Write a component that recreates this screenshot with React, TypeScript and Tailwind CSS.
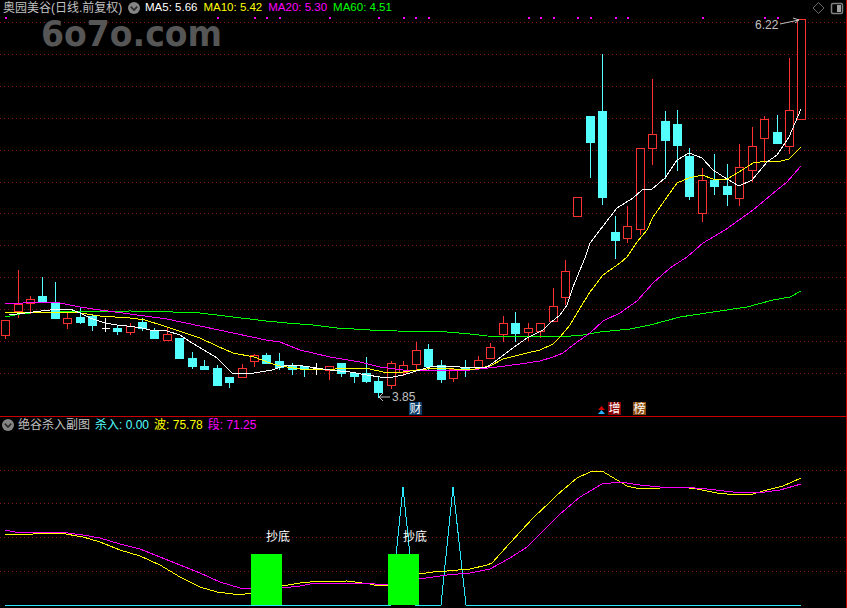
import React from "react";

type Candle = [number, "r" | "c" | "w", number, number, number, number];

// x, kind, high, body top, body bottom, low (all in screen pixels)
const candles: Candle[] = [
  [5, "r", 320, 320, 335, 338],
  [18, "r", 270, 304, 311, 317],
  [30, "r", 296, 299, 303, 313],
  [42, "c", 277, 296, 302, 302],
  [55, "c", 282, 302, 318, 318],
  [67, "r", 313, 318, 323, 328],
  [80, "c", 308, 317, 322, 323],
  [92, "c", 315, 316, 325, 330],
  [105, "w", 318, 328, 328, 331],
  [117, "c", 325, 328, 331, 334],
  [130, "r", 323, 326, 332, 334],
  [142, "c", 318, 322, 328, 330],
  [154, "c", 328, 331, 338, 338],
  [167, "r", 328, 334, 340, 340],
  [179, "c", 338, 338, 358, 358],
  [192, "c", 352, 358, 366, 368],
  [204, "c", 360, 366, 369, 369],
  [217, "c", 365, 368, 385, 385],
  [229, "c", 377, 377, 382, 387],
  [242, "r", 364, 368, 377, 377],
  [254, "r", 354, 355, 361, 366],
  [266, "c", 353, 355, 363, 363],
  [279, "c", 353, 361, 367, 369],
  [292, "c", 363, 366, 369, 374],
  [304, "c", 366, 366, 369, 376],
  [316, "w", 363, 368, 368, 374],
  [329, "r", 366, 366, 370, 379],
  [341, "c", 363, 363, 373, 376],
  [354, "c", 373, 373, 376, 382],
  [366, "c", 357, 373, 381, 382],
  [378, "c", 376, 381, 392, 397],
  [391, "r", 361, 363, 385, 388],
  [403, "r", 361, 365, 372, 375],
  [416, "r", 342, 350, 364, 370],
  [428, "c", 344, 349, 366, 370],
  [441, "c", 360, 365, 379, 382],
  [453, "r", 369, 369, 378, 381],
  [465, "c", 360, 367, 369, 376],
  [478, "r", 356, 360, 367, 369],
  [490, "r", 343, 347, 358, 358],
  [503, "r", 316, 323, 334, 341],
  [515, "c", 312, 323, 333, 341],
  [528, "r", 323, 328, 332, 340],
  [540, "r", 323, 323, 331, 337],
  [553, "r", 288, 306, 321, 321],
  [565, "r", 260, 271, 297, 304],
  [577, "r", 197, 197, 216, 216],
  [590, "c", 116, 116, 142, 177],
  [602, "c", 54, 111, 197, 204],
  [615, "c", 216, 232, 240, 258],
  [627, "r", 206, 226, 238, 242],
  [640, "r", 148, 148, 229, 234],
  [652, "r", 79, 134, 148, 164],
  [665, "c", 111, 121, 140, 178],
  [677, "c", 110, 124, 145, 170],
  [689, "c", 148, 156, 196, 199],
  [702, "r", 168, 180, 213, 221],
  [714, "c", 154, 180, 186, 194],
  [727, "c", 164, 186, 194, 205],
  [739, "r", 144, 167, 198, 205],
  [752, "r", 127, 146, 170, 181],
  [764, "r", 116, 119, 138, 162],
  [777, "c", 115, 132, 143, 143],
  [789, "r", 58, 110, 146, 153],
  [801, "r", 19, 19, 119, 119],
];

const ma5 =
  "9,315 33,312 50,310 70,309 80,313 90,318 105,323 117,325 127,326 142,328 150,330 167,331 180,335 192,343 204,350 217,358 227,368 232,373 248,374 260,372 272,370 287,365 303,366 316,368 330,370 350,372 367,375 380,377 393,377 403,375 413,372 423,369 433,366 450,366 470,368 487,367 497,360 510,350 527,338 543,330 550,323 560,315 567,305 573,287 580,270 585,258 590,243 600,230 617,208 633,198 642,190 652,189 665,178 677,160 689,153 702,158 713,170 727,179 739,186 752,180 767,162 777,155 789,137 801,109";
const ma10 =
  "5,312 40,312 55,313 70,312 80,313 100,316 130,318 145,320 167,327 200,338 217,346 233,353 254,357 270,363 280,366 300,369 320,370 350,368 370,369 383,372 403,372 417,370 437,368 470,370 490,366 503,359 527,353 540,350 553,344 560,337 570,325 580,308 590,292 603,275 620,263 627,257 637,242 647,230 653,217 667,197 677,183 689,178 702,175 713,179 727,179 739,172 753,163 767,161 777,162 789,159 801,147";
const ma20 =
  "5,304 42,302 60,303 80,307 100,310 130,314 167,319 200,326 233,333 266,340 280,342 300,350 330,357 360,362 380,367 403,370 437,371 470,370 497,367 520,364 540,361 553,357 563,353 573,345 590,333 603,321 620,313 637,301 653,283 670,268 687,257 703,243 725,230 753,210 777,190 787,182 801,166";
const ma60 =
  "5,317 20,314 40,312 60,312 130,311 173,312 200,313 233,317 266,321 287,323 313,325 337,328 370,330 397,331 447,332 470,334 487,336 560,337 583,335 600,332 630,329 650,325 680,317 713,312 747,307 773,300 790,297 801,291";

const subYellow =
  "5,535 33,534 60,533 83,537 100,542 120,550 140,556 160,565 180,577 200,587 217,592 233,594 245,594 251,593 282,586 300,583 310,582 347,581 362,583 370,584 378,586 388,585 419,574 433,572 447,571 470,569 487,565 492,563 510,543 533,518 550,502 557,495 577,478 590,472 602,471 617,480 627,486 640,489 660,488 680,487 697,489 717,493 737,495 753,494 763,491 783,486 801,478";
const subMagenta =
  "5,530 15,532 60,532 83,535 100,538 120,544 140,549 160,557 180,565 200,573 220,582 240,588 251,589 282,588 300,586 310,584 333,583 362,583 388,585 419,579 433,577 447,575 470,573 490,569 510,558 527,547 550,524 560,514 580,497 602,484 620,482 640,485 660,487 683,487 707,489 733,492 757,493 780,490 801,484";
const subCyan = "5,605 391,605 403,487 415,605 441,605 453,487 466,605 801,605";

const mainGrid = [22, 54, 86, 118, 150, 182, 213, 245, 277, 309, 341, 373];
const subGrid = [470, 503, 537, 571];
const signalDots = [5, 217, 254, 266, 279, 329, 378, 403, 415, 428, 528, 540, 553, 577, 590, 615, 627, 702, 764, 777];

const RED = "#ff3232";
const CYAN = "#54ffff";
const GRID = "#8a1212";

function CandleMark({ candle }: { candle: Candle }) {
  const [x, kind, high, top, bottom, low] = candle;
  const color = kind === "r" ? RED : kind === "c" ? CYAN : "#ffffff";
  const cx = x + 0.5;
  return (
    <g stroke={color} strokeWidth={1}>
      {high < top && <line x1={cx} x2={cx} y1={high} y2={top} />}
      {low > bottom && <line x1={cx} x2={cx} y1={bottom} y2={low + 1} />}
      {kind === "w" ? (
        <line x1={cx - 4} x2={cx + 4} y1={top + 0.5} y2={top + 0.5} />
      ) : (
        <rect
          x={cx - 4}
          y={top + 0.5}
          width={8}
          height={bottom - top}
          fill={kind === "c" ? CYAN : "#000000"}
        />
      )}
    </g>
  );
}

function Chevron() {
  return (
    <svg width="12" height="12" viewBox="0 0 12 12" className="shrink-0">
      <circle cx="6" cy="6" r="6" fill="#858585" />
      <path d="M2.8 4.6 L6 8 L9.2 4.6" fill="none" stroke="#2a2a2a" strokeWidth="1.6" />
    </svg>
  );
}

function Ma({ label, value, color }: { label: string; value: string; color: string }) {
  return (
    <span className="whitespace-pre text-[11.5px]" style={{ color }}>
      {label}: {value}
    </span>
  );
}

function Chip({ text, className }: { text: string; className: string }) {
  return (
    <span
      className={`absolute top-[402px] flex h-[13px] w-[13px] items-center justify-center text-[12px] leading-none text-white ${className}`}
    >
      {text}
    </span>
  );
}

export default function App() {
  return (
    <div className="flex h-[608px] w-[847px] flex-col overflow-hidden border-r border-[#c80000] bg-black [font-family:'Liberation_Sans','Noto_Sans_CJK_SC',sans-serif]">
      {/* Main chart */}
      <div className="relative h-[417px] shrink-0 border-b border-[#c80000]">
        <svg width="846" height="416" viewBox="0 0 846 416" className="block">
          {mainGrid.map((y) => (
            <line key={y} x1="0" x2="846" y1={y + 0.5} y2={y + 0.5} stroke={GRID} strokeDasharray="1 3" />
          ))}
          <text
            x="41"
            y="46"
            fill="#565656"
            fontSize="36"
            fontWeight="700"
            textLength="181"
            lengthAdjust="spacingAndGlyphs"
            className="[font-family:'DejaVu_Sans',sans-serif]"
          >
            6o7o.com
          </text>
          {signalDots.map((x) => (
            <rect key={x} x={x} y="17" width="2" height="2" fill="#ff00ff" />
          ))}
          <g shapeRendering="crispEdges">
            {candles.map((c) => (
              <CandleMark key={c[0]} candle={c} />
            ))}
            <polyline points={ma60} fill="none" stroke="#00ff00" />
            <polyline points={ma20} fill="none" stroke="#ff00ff" />
            <polyline points={ma10} fill="none" stroke="#ffff00" />
            <polyline points={ma5} fill="none" stroke="#ffffff" />
          </g>

          {/* high / low tags */}
          <text x="755" y="29" fill="#c0c0c0" fontSize="12">6.22</text>
          <path d="M780 24 L799 20 M793 18 L799 20 L795 23" fill="none" stroke="#c0c0c0" />
          <text x="392" y="401" fill="#c0c0c0" fontSize="12">3.85</text>
          <path d="M390 397 L379 397 M383 393 L379 397 L383 401" fill="none" stroke="#c0c0c0" />

          {/* window buttons */}
          <path d="M818.5 2.5 L824 8 L818.5 13.5 L813 8 Z" fill="none" stroke="#666666" />
          <rect x="831.5" y="3.5" width="11" height="10" rx="1.5" fill="none" stroke="#808080" strokeWidth="1.5" />
          <rect x="837" y="5" width="4" height="7" fill="#a0a0a0" />

          {/* little up arrows next to the chips */}
          <path d="M601.5 406 L605 410 L598 410 Z" fill="#d40000" />
          <path d="M601.5 410 L605 414 L598 414 Z" fill="#2ab4ff" />
        </svg>

        <div className="absolute left-[3px] top-0 flex h-[16px] items-center text-[12px] text-[#c0c0c0]">
          <span className="w-[125px] whitespace-nowrap">奥园美谷(日线.前复权)</span>
          <Chevron />
          <div className="ml-[5px] flex gap-[6px]">
            <Ma label="MA5" value="5.66" color="#ffffff" />
            <Ma label="MA10" value="5.42" color="#ffff00" />
            <Ma label="MA20" value="5.30" color="#ff00ff" />
            <Ma label="MA60" value="4.51" color="#00ff00" />
          </div>
        </div>

        <Chip text="财" className="left-[409px] bg-[#0a3c68]" />
        <Chip text="增" className="left-[608px] bg-[#8a0000]" />
        <Chip text="榜" className="left-[633px] bg-[#8a4c10]" />
      </div>

      {/* Sub chart */}
      <div className="relative flex-1">
        <svg width="846" height="191" viewBox="0 417 846 191" className="block">
          {subGrid.map((y) => (
            <line key={y} x1="0" x2="846" y1={y + 0.5} y2={y + 0.5} stroke={GRID} strokeDasharray="1 3" />
          ))}
          <g shapeRendering="crispEdges">
            <polyline points={subCyan} fill="none" stroke="#2ce8ff" />
            <polyline points={subYellow} fill="none" stroke="#ffff00" />
            <polyline points={subMagenta} fill="none" stroke="#ff00ff" />
            <rect x="251" y="554" width="31" height="51" fill="#00ff00" />
            <rect x="388" y="554" width="31" height="51" fill="#00ff00" />
          </g>
          <text x="266" y="541" fill="#ffffff" fontSize="12">抄底</text>
          <text x="403" y="541" fill="#ffffff" fontSize="12">抄底</text>
        </svg>

        <div className="absolute left-[2px] top-[2px] flex h-[12px] items-center text-[12px] whitespace-pre">
          <Chevron />
          <span className="ml-[4px] text-[#c0c0c0]">绝谷杀入副图</span>
          <span className="ml-[5px] text-[#54ffff]">杀入: 0.00</span>
          <span className="ml-[5px] text-[#ffff00]">波: 75.78</span>
          <span className="ml-[5px] text-[#ff00ff]">段: 71.25</span>
        </div>
      </div>
    </div>
  );
}
